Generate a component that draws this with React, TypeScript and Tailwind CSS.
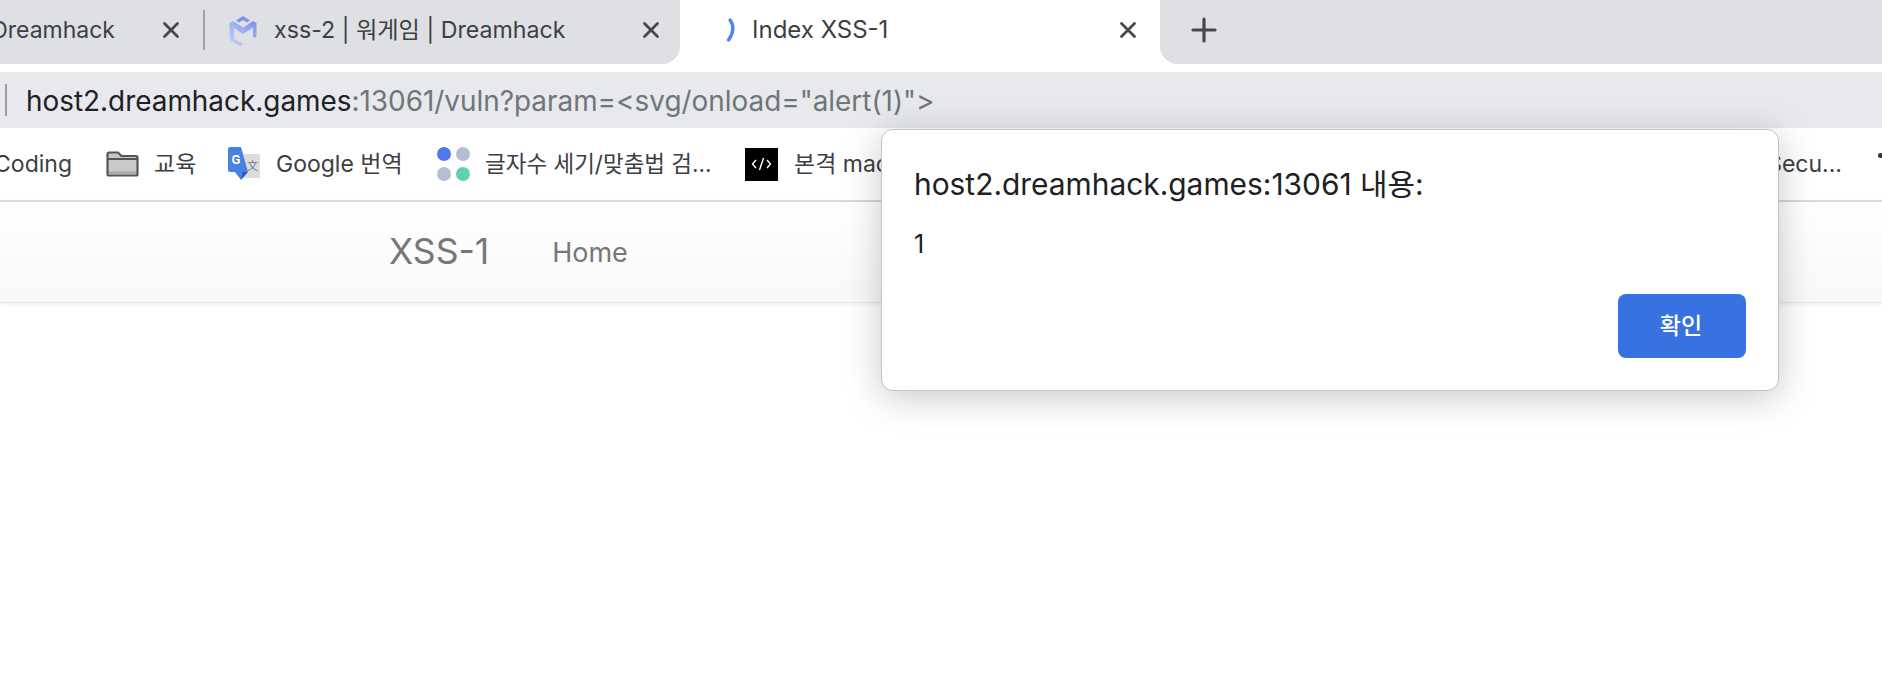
import React from "react";

const FONT = "[font-family:Inter,'Noto_Sans_CJK_KR',sans-serif]";

function CloseIcon() {
  return (
    <svg width="18" height="18" viewBox="0 0 18 18" className="shrink-0">
      <path d="M2.500 2.500 15.500 15.500M15.500 2.500 2.500 15.500" stroke="#45474b" strokeWidth="2.800" strokeLinecap="round" />
    </svg>
  );
}

function DreamhackLogo() {
  return (
    <svg width="30" height="34" viewBox="0 0 30 34" className="shrink-0">
      <defs>
        <linearGradient id="dh" x1="0" y1="1" x2="1" y2="0">
          <stop offset="0" stopColor="#c6d3fd" />
          <stop offset="1" stopColor="#7c8fec" />
        </linearGradient>
      </defs>
      <path d="M8 7.500 15 3l7 4.500-3 2-4-2.500-4 2.500z" fill="#7f8fe9" />
      <path d="M1.500 10 5 8l10 6.500L25 8l3.500 2v13a2 2 0 0 1-3.500 1V14.500l-10 6.500-9-6v11l9 5-2.500 2.500L3 28a3 3 0 0 1-1.500-2.500z" fill="url(#dh)" />
    </svg>
  );
}

function FolderIcon() {
  return (
    <svg width="33" height="26" viewBox="0 0 33 26" className="shrink-0">
      <path d="M1.500 3a1.500 1.500 0 0 1 1.500-1.500h9l3.500 3.500H30a1.500 1.500 0 0 1 1.500 1.500V23a1.500 1.500 0 0 1-1.500 1.500H3A1.500 1.500 0 0 1 1.500 23z" fill="#c9c9c9" stroke="#555" strokeWidth="2.200" />
      <path d="M2 8h29" stroke="#555" strokeWidth="2" />
      <path d="M3 20.500h27v3H3z" fill="#a8a8a8" />
    </svg>
  );
}

function TranslateIcon() {
  return (
    <svg width="32" height="34" viewBox="0 0 32 34" className="shrink-0">
      <rect x="13" y="7" width="19" height="24" rx="1.500" fill="#dcdcdc" />
      <path d="M0 2a2 2 0 0 1 2-2h11l7 25h-6l-1 8-6-8H2a2 2 0 0 1-2-2z" fill="#4a80e0" />
      <path d="M14 25h6l-7 8z" fill="#2a56c6" />
      <text x="3.500" y="17" fontSize="13" fontWeight="700" fill="#fff" fontFamily="Roboto, sans-serif">G</text>
      <text x="19" y="23" fontSize="11" fill="#6b7684" fontFamily="'Noto Sans CJK SC', sans-serif">文</text>
    </svg>
  );
}

function DotsIcon() {
  return (
    <div className="grid shrink-0 grid-cols-[14px_14px] gap-x-[5px] gap-y-[6px]">
      <span className="size-[14px] rounded-full bg-[#5078ec]" />
      <span className="size-[14px] rounded-full bg-[#b4bed2]" />
      <span className="size-[14px] rounded-full bg-[#b4bed2]" />
      <span className="size-[14px] rounded-full bg-[#5fd2ad]" />
    </div>
  );
}

function CodeIcon() {
  return (
    <div className="flex h-[33px] w-[33px] shrink-0 items-center justify-center bg-black">
      <svg width="21" height="14" viewBox="0 0 21 14">
        <path d="M5 3 1.500 7 5 11M16 3l3.500 4L16 11M12.500 1 8.500 13" fill="none" stroke="#fff" strokeWidth="1.400" />
      </svg>
    </div>
  );
}

export default function App() {
  return (
    <div className={`relative h-[680px] w-[1882px] overflow-hidden bg-white ${FONT}`}>
      {/* Tab strip */}
      <div className="flex h-16 bg-white">
        <div className="flex w-[680px] shrink-0 items-center rounded-br-[18px] bg-[#dfe0e4] pb-1 text-[23px] text-[#3c4043]">
          <div className="flex w-[115px] shrink-0 justify-end overflow-hidden whitespace-nowrap">Dreamhack</div>
          <div className="ml-[47px]"><CloseIcon /></div>
          <div className="ml-[23px] h-10 w-[2px] bg-[#a0a1a5]" />
          <div className="ml-[23px]"><DreamhackLogo /></div>
          <span className="ml-4 w-[293px] shrink-0 whitespace-nowrap text-[23.200px]">xss-2 | 워게임 | Dreamhack</span>
          <div className="ml-[75px]"><CloseIcon /></div>
        </div>
        <div className="flex w-[480px] shrink-0 items-center rounded-t-[18px] bg-white pb-1 text-[24px] text-[#3c4043]">
          <svg width="12" height="26" viewBox="0 0 12 26" className="ml-[46px] shrink-0">
            <path d="M4 3c4 5 4 13-1.500 20" fill="none" stroke="#4f86f0" strokeWidth="3.400" strokeLinecap="round" />
          </svg>
          <span className="ml-[14px] w-[310px] shrink-0 whitespace-nowrap">Index XSS-1</span>
          <div className="ml-[57px]"><CloseIcon /></div>
        </div>
        <div className="flex flex-1 items-center rounded-bl-[18px] bg-[#dfe0e4] pb-1">
          <svg width="26" height="26" viewBox="0 0 26 26" className="ml-[31px]">
            <path d="M13 2v22M2 13h22" stroke="#45474b" strokeWidth="3.200" strokeLinecap="round" />
          </svg>
        </div>
      </div>

      {/* Address bar */}
      <div className="mt-2 flex h-14 items-center bg-[#e8e9ec] text-[27.900px]">
        <div className="ml-[5px] h-8 w-[2px] bg-[#9a9c9f]" />
        <div className="ml-[19px] mt-[3px] whitespace-nowrap">
          <span className="text-[#202124]">host2.dreamhack.games</span>
          <span className="text-[#70757a]">:13061/vuln?param=&lt;svg/onload="alert(1)"&gt;</span>
        </div>
      </div>

      {/* Bookmarks */}
      <div className="flex h-[74px] items-center border-b-2 border-[#dcdcdc] bg-white text-[23px] text-[#3c4043]">
        <div className="flex w-[72px] shrink-0 justify-end overflow-hidden whitespace-nowrap">Coding</div>
        <div className="ml-[34px]"><FolderIcon /></div>
        <span className="ml-[15px] w-10 shrink-0 whitespace-nowrap">교육</span>
        <div className="ml-[34px]"><TranslateIcon /></div>
        <span className="ml-4 w-[128px] shrink-0 whitespace-nowrap">Google 번역</span>
        <div className="ml-[33px]"><DotsIcon /></div>
        <span className="ml-[15px] w-[227px] shrink-0 whitespace-nowrap text-[22.500px]">글자수 세기/맞춤법 검...</span>
        <div className="ml-[33px]"><CodeIcon /></div>
        <span className="ml-4 w-[300px] shrink-0 overflow-hidden whitespace-nowrap">본격 macOS</span>
        <span className="ml-[548px] flex w-[200px] shrink-0 justify-end overflow-hidden whitespace-nowrap">Secu...</span>
        <span className="-mt-[18px] ml-[36px] size-[5px] shrink-0 rounded-full bg-[#333]" />
      </div>

      {/* Page navbar */}
      <div className="flex h-[101px] items-center border-b border-[#e7e7e7] bg-gradient-to-b from-white to-[#f8f8f8] text-[#777] shadow-[0_1px_5px_rgba(0,0,0,0.075)]">
        <span className="ml-[389px] text-[35.500px] leading-none">XSS-1</span>
        <span className="ml-[63px] text-[27px] leading-none">Home</span>
      </div>

      {/* Alert dialog */}
      <div className="absolute left-[881px] top-[129px] flex h-[262px] w-[898px] flex-col rounded-[12px] border border-[#c4c4c4] bg-white px-8 pt-[35px] text-[#202124] shadow-[0_6px_36px_rgba(0,0,0,0.22)]">
        <div className="text-[29.900px] leading-[38px] whitespace-nowrap">host2.dreamhack.games:13061 내용:</div>
        <div className="mt-[22px] text-[25px] leading-[38px]">1</div>
        <div className="absolute left-[736px] top-[164px] flex h-16 w-32 items-center justify-center rounded-lg bg-[#3871e0] pr-[2px] text-[23px] font-medium text-white">확인</div>
      </div>
    </div>
  );
}
